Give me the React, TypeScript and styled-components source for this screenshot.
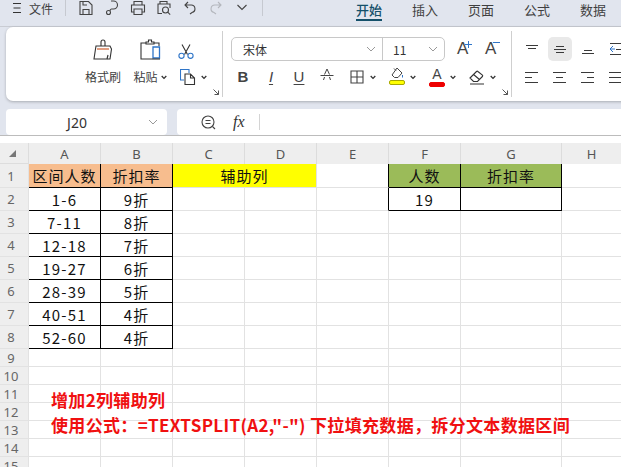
import React from 'react';
import styled, { createGlobalStyle } from 'styled-components';

const CJK = `"Noto Sans CJK SC", "Noto Sans", sans-serif`;
const INK = '#3f3f3f';

const GlobalStyle = createGlobalStyle`
	html, body {
		margin: 0;
		height: 467px;
		overflow: hidden;
		background: #fff;
		font-family: ${CJK};
	}
`;

const Page = styled.div`
	width: 621px;
	height: 467px;
	overflow: hidden;
`;

// 상단 타이틀 바
const TitleBar = styled.div`
	height: 26px;
	display: flex;
	align-items: flex-start;
	padding: 0 15px 0 13px;
	background: #e1e5ee;
	border-bottom: 1px solid #c9ccd3;
`;

const MenuGlyph = styled.svg`
	width: 8px;
	height: 12px;
	margin-top: 2px;
	margin-right: 8px;
`;

const FileLabel = styled.span`
	font-size: 12px;
	line-height: 18px;
	color: ${INK};
	white-space: nowrap;
`;

const BarDivider = styled.div<{ $left: number; $right: number }>`
	width: 1px;
	height: 16px;
	background: #c6c9d0;
	margin-left: ${(p) => p.$left}px;
	margin-right: ${(p) => p.$right}px;
`;

const QuickTools = styled.div`
	display: flex;
	gap: 10px;
	height: 16px;
`;

const Tabs = styled.nav`
	display: flex;
	gap: 30px;
	margin-left: auto;
`;

const Tab = styled.span<{ $active?: boolean }>`
	height: 19px;
	font-size: 13px;
	line-height: 19px;
	white-space: nowrap;
	font-weight: ${(p) => (p.$active ? 500 : 400)};
	color: ${(p) => (p.$active ? '#14506a' : INK)};
	border-bottom: 2px solid ${(p) => (p.$active ? '#14506a' : 'transparent')};
`;

// 리본 메뉴
const ToolArea = styled.div`
	background: #e1e5ee;
	padding: 0 0 0 6px;
	height: 108px;
	border-bottom: 1px solid #bcbcbc;
`;

const Ribbon = styled.div`
	width: 640px;
	height: 74px;
	display: flex;
	padding: 4px 0;
	box-sizing: border-box;
	background: #fff;
	border-radius: 7px;
	box-shadow: 0 1px 3px rgba(0, 0, 0, 0.25);
`;

const Group = styled.div<{ $width: number; $pad: number }>`
	position: relative;
	width: ${(p) => p.$width}px;
	box-sizing: border-box;
	padding: 6px 0 0 ${(p) => p.$pad}px;
	border-right: 1px solid #cfcfcf;
	display: flex;
	flex-direction: column;
	gap: 4px;
`;

const OpenAlign = styled(Group)`
	border-right: 0;
`;

const Launcher = styled.svg`
	position: absolute;
	right: 3px;
	bottom: 2px;
	width: 6px;
	height: 6px;
`;

const ClipGrid = styled.div`
	display: grid;
	grid-template-columns: 46px 48px 42px;
	grid-template-rows: 24px 24px;
	row-gap: 4px;
`;

const BigIcon = styled.div`
	display: flex;
	justify-content: center;
	align-items: flex-end;
	padding-bottom: 1px;
`;

const ToolLabel = styled.div`
	display: flex;
	justify-content: center;
	align-items: center;
	gap: 3px;
	font-size: 12px;
	line-height: 22px;
	color: ${INK};
	white-space: nowrap;
`;

const ScissorSlot = styled.div`
	display: flex;
	align-items: center;
	padding: 5px 0 0 4px;
`;

const CopySlot = styled.div`
	display: flex;
	align-items: center;
	gap: 5px;
	padding-left: 6px;
`;

const ToolRow = styled.div`
	display: flex;
	align-items: center;
	height: 24px;
`;

const FontSelect = styled.div`
	width: 214px;
	height: 24px;
	box-sizing: border-box;
	display: flex;
	border: 1px solid #c8c8c8;
	border-radius: 5px;
`;

const SelectPart = styled.div<{ $width?: number; $pad: number; $divide?: boolean }>`
	flex: ${(p) => (p.$width ? `0 0 ${p.$width}px` : 1)};
	box-sizing: border-box;
	display: flex;
	align-items: center;
	justify-content: space-between;
	padding: 0 6px 0 ${(p) => p.$pad}px;
	font-size: 12px;
	color: #333;
	border-left: ${(p) => (p.$divide ? '1px solid #c8c8c8' : 'none')};
`;

const SizeButtons = styled.div`
	display: flex;
	gap: 14px;
	margin-left: 12px;
`;

const SizeButton = styled.div`
	display: flex;
	width: 14px;
	align-items: flex-start;
	font-family: 'Liberation Sans', sans-serif;
	font-size: 17px;
	line-height: 20px;
	color: #444;
`;

const SizeMark = styled.svg`
	width: 7px;
	height: 7px;
	margin-left: -3px;
	margin-top: 2px;
	flex: none;
`;

const FormatRow = styled(ToolRow)`
	gap: 14px;
	padding-left: 4px;
`;

const PlainTools = styled.div`
	display: flex;
	gap: 12px;
`;

const DropTools = styled.div`
	display: flex;
	gap: 13px;
`;

const DropTool = styled.div`
	display: flex;
	align-items: center;
	gap: 5px;
`;

const LetterTool = styled.span<{ $bold?: boolean; $italic?: boolean; $mark?: string }>`
	width: 16px;
	height: 20px;
	text-align: center;
	font-family: 'Liberation Sans', sans-serif;
	font-size: 15px;
	line-height: 19px;
	color: #444;
	font-weight: ${(p) => (p.$bold ? 700 : 400)};
	font-style: ${(p) => (p.$italic ? 'italic' : 'normal')};
	text-decoration: ${(p) => p.$mark || 'none'};
	text-decoration-thickness: 1px;
	text-underline-offset: 2px;
`;

const ColorTool = styled.div`
	width: 16px;
	height: 20px;
	display: flex;
	flex-direction: column;
	align-items: center;
`;

const ColorLetter = styled.span`
	font-family: 'Liberation Sans', sans-serif;
	font-size: 14px;
	line-height: 14px;
	color: #444;
`;

const ColorBar = styled.span<{ $fill: string; $line: string }>`
	width: 16px;
	height: 5px;
	margin-top: 1px;
	box-sizing: border-box;
	background: ${(p) => p.$fill};
	border: 1px solid ${(p) => p.$line};
	border-radius: 2px;
`;

const AlignGrid = styled.div`
	display: grid;
	grid-template-columns: repeat(4, 24px);
	grid-auto-rows: 24px;
	gap: 4px;
`;

const AlignButton = styled.div<{ $on?: boolean }>`
	display: flex;
	align-items: center;
	justify-content: center;
	border-radius: 5px;
	background: ${(p) => (p.$on ? '#e9e9e9' : 'transparent')};
`;

// 수식 입력줄
const FormulaRow = styled.div`
	display: flex;
	gap: 10px;
	margin-top: 8px;
	height: 26px;
`;

const NameBox = styled.div`
	width: 161px;
	flex: none;
	display: flex;
	align-items: center;
	background: #fff;
	border-radius: 4px;
	font-family: 'Noto Sans', sans-serif;
	font-size: 14px;
	color: #333;
`;

const NameText = styled.span`
	width: 142px;
	text-align: center;
`;

const FormulaBox = styled.div`
	flex: 1;
	display: flex;
	align-items: center;
	padding-left: 24px;
	background: #fff;
	border-radius: 4px 0 0 4px;
`;

const FxLabel = styled.span`
	width: 26px;
	margin-left: 17px;
	font-family: 'Liberation Serif', serif;
	font-style: italic;
	font-size: 16px;
	color: #333;
`;

const FormulaDivider = styled.span`
	width: 1px;
	height: 16px;
	background: #d4d4d4;
`;

// 시트 영역
const SheetWrap = styled.div`
	position: relative;
	padding-top: 7px;
`;

const Sheet = styled.div`
	display: grid;
	grid-template-columns: 29px repeat(6, 72px) 101px 60px;
	grid-template-rows: 21px 24px repeat(7, 23px) repeat(7, 18px);
`;

const Corner = styled.div`
	display: flex;
	align-items: center;
	padding-left: 9px;
	background: #eee;
	border-right: 1px solid #ddd;
	border-bottom: 1px solid #ddd;
`;

const ColHead = styled.div`
	display: flex;
	align-items: center;
	justify-content: center;
	background: #eee;
	border-right: 1px solid #dcdcdc;
	font-family: 'Noto Sans', sans-serif;
	font-size: 13px;
	color: #555;
`;

const RowHead = styled.div`
	display: flex;
	align-items: center;
	justify-content: center;
	padding-right: 6px;
	background: #eee;
	border-bottom: 1px solid #e2e2e2;
	border-right: 1px solid #e2e2e2;
	font-family: 'Noto Sans', sans-serif;
	font-size: 13px;
	color: #666;
`;

const Cell = styled.div<{ $fill?: string; $right?: boolean; $bottom?: boolean; $span?: number; $digits?: boolean }>`
	display: flex;
	align-items: center;
	justify-content: center;
	grid-column: span ${(p) => p.$span || 1};
	overflow: hidden;
	white-space: nowrap;
	background: ${(p) => p.$fill || '#fff'};
	border-right: 1px solid ${(p) => (p.$right ? '#000' : '#e2e2e2')};
	border-bottom: 1px solid ${(p) => (p.$bottom ? '#000' : '#e2e2e2')};
	font-size: 15px;
	letter-spacing: ${(p) => (p.$digits ? 1.2 : 1)}px;
	color: #111;
`;

const Note = styled.div`
	position: absolute;
	left: 51px;
	top: 251px;
	font-size: 17px;
	line-height: 25px;
	letter-spacing: 0.33px;
	font-weight: 700;
	white-space: nowrap;
	color: #f01010;
`;

const LINE = { fill: 'none', stroke: '#444', strokeWidth: 1.1 } as const;

const Chevron = () => (
	<svg width="6" height="5" viewBox="0 0 6 5">
		<path d="M.7 1l2.300 2.400L5.300 1" fill="none" stroke="#333" strokeWidth="1.300" />
	</svg>
);

const SelectChevron = () => (
	<svg width="10" height="6" viewBox="0 0 10 6">
		<path d="M1 1l4 4 4-4" fill="none" stroke="#999" strokeWidth="1" />
	</svg>
);

const Save = () => (
	<svg width="16" height="16" viewBox="0 0 16 16" {...LINE}>
		<path d="M2 1.500h8.500l3.500 3.500v9.500H2z" />
		<path d="M5 14v-4.500h6V14M5 2v3h4" />
	</svg>
);

const Painter = () => (
	<svg width="16" height="16" viewBox="0 0 16 16" {...LINE}>
		<path d="M7 1h2.500a4 4 0 0 1 0 8H7.500c-1 0-1.500 1-1.500 2" />
		<circle cx="4.500" cy="12.500" r="2" />
	</svg>
);

const Printer = () => (
	<svg width="16" height="16" viewBox="0 0 16 16" {...LINE}>
		<path d="M4 5V1.500h8V5M4 12H1.500V5h13v7H12" />
		<path d="M4 9h8v5.500H4z" />
	</svg>
);

const Preview = () => (
	<svg width="16" height="16" viewBox="0 0 16 16" {...LINE}>
		<path d="M4 4V1.500h7V4M6 13.500H2V4h12v4" />
		<circle cx="9.500" cy="10" r="3" />
		<path d="M11.700 12.200l2.500 2.500" />
	</svg>
);

const Undo = () => (
	<svg width="16" height="16" viewBox="0 0 16 16" {...LINE}>
		<path d="M6 2L3 5l3 3M3 5h6a3.800 3.800 0 0 1 1 7.500L8 14" />
	</svg>
);

const Redo = () => (
	<svg width="16" height="16" viewBox="0 0 16 16" {...LINE} stroke="#b4b7bd">
		<path d="M10 2l3 3-3 3M13 5H7a3.800 3.800 0 0 0-1 7.500L8 14" />
	</svg>
);

const QuickChevron = () => (
	<svg width="16" height="16" viewBox="0 0 16 16" {...LINE}>
		<path d="M3.500 5L8 9.500 12.500 5" />
	</svg>
);

const Brush = () => (
	<svg width="20" height="21" viewBox="0 0 20 21" fill="none" stroke="#333" strokeWidth="1.100">
		<path d="M8 7V3a2 2 0 0 1 4 0v4" />
		<path d="M3 7h14l1.500 3-1.500 10H1L2.500 10z" />
		<path d="M4 10h12" stroke="#c8501e" />
		<path d="M14 20l1-4" />
	</svg>
);

const Paste = () => (
	<svg width="21" height="21" viewBox="0 0 21 21" fill="none" stroke="#333" strokeWidth="1.100">
		<path d="M12 20H1V4h5M14 4h5v3" />
		<path d="M6 5V3h2.500V1h3v2H14v2z" />
		<path d="M13 8h6.500v11H13z" stroke="#2f75c8" strokeWidth="1.300" />
		<path d="M12 20h8" />
	</svg>
);

const Scissors = () => (
	<svg width="16" height="15" viewBox="0 0 16 15" fill="none" strokeWidth="1.100">
		<path d="M4 0.500l5.500 10M12 0.500L6.500 10.500" stroke="#333" />
		<circle cx="3.500" cy="11.800" r="2.600" stroke="#2f75c8" />
		<circle cx="12.500" cy="11.800" r="2.600" stroke="#2f75c8" />
	</svg>
);

const Copy = () => (
	<svg width="16" height="16" viewBox="0 0 16 16" fill="none" strokeWidth="1.100">
		<path d="M4 11H.5V.500H9V4" stroke="#2f75c8" />
		<path d="M5 15.500V5h5.500l4 4v6.500zM10.500 5v4h4" stroke="#333" />
	</svg>
);

const Strike = () => (
	<svg width="16" height="18" viewBox="0 0 16 18" fill="none" stroke="#444" strokeWidth="1">
		<path d="M5.500 7.500L8 2l2.500 5.500M4.500 13l1-3M11.500 13l-1-3M1.500 8.500h13" />
	</svg>
);

const Borders = () => (
	<svg width="16" height="16" viewBox="0 0 16 16" fill="none" stroke="#444" strokeWidth="1.100">
		<path d="M2 2h12v12H2zM8 2v12M2 8h12" />
	</svg>
);

const Bucket = () => (
	<svg width="16" height="12" viewBox="0 0 16 12" fill="none" stroke="#444" strokeWidth="1">
		<path d="M8 1l5 5-4 4.500H5.500L3 8z" />
		<path d="M5 1.500l2 2" />
		<path d="M13.500 8v2.500" stroke="#2f75c8" />
	</svg>
);

const Eraser = () => (
	<svg width="16" height="16" viewBox="0 0 16 16" fill="none" stroke="#333" strokeWidth="1.100">
		<path d="M1 9l6.500-6.500a1 1 0 0 1 1.400 0l4.500 3.600a1 1 0 0 1 0 1.400L8.500 12.500H4.500z" />
		<path d="M4.500 5.500l6 5M1 15h14" />
	</svg>
);

const Bars = ({ rows, blue }: { rows: number[][]; blue?: boolean }) => (
	<svg width="14" height="14" viewBox="0 0 14 14" fill="none" stroke="#3a3a3a" strokeWidth="1">
		{rows.map(([x1, x2, y], i) => (
			<path key={i} d={`M${x1} ${y}.5H${x2}`} />
		))}
		{blue && <path d="M4 4L1 7l3 3M1 7h5" stroke="#2f75c8" />}
	</svg>
);

const ALIGN: { rows: number[][]; on?: boolean; blue?: boolean }[] = [
	{ rows: [[1, 13, 3], [3, 11, 6]] },
	{ rows: [[3, 11, 4], [1, 13, 7], [3, 11, 10]], on: true },
	{ rows: [[3, 11, 8], [1, 13, 11]] },
	{ rows: [[1, 14, 1], [7, 14, 7], [1, 14, 12]], blue: true },
	{ rows: [[0, 13, 2], [0, 7, 7], [0, 13, 12]] },
	{ rows: [[0, 13, 2], [3, 10, 7], [0, 13, 12]] },
	{ rows: [[0, 13, 2], [6, 13, 7], [0, 13, 12]] },
	{ rows: [[0, 14, 2], [0, 14, 7], [0, 14, 12]] },
];

const LauncherIcon = () => (
	<Launcher viewBox="0 0 6 6" fill="none" stroke="#555" strokeWidth="1">
		<path d="M.5.500l5 5M1.500 5.500h4v-4" />
	</Launcher>
);

const COLUMNS = ['A', 'B', 'C', 'D', 'E', 'F', 'G', 'H'];

const RANGES: [string, string][] = [
	['1-6', '9折'],
	['7-11', '8折'],
	['12-18', '7折'],
	['19-27', '6折'],
	['28-39', '5折'],
	['40-51', '4折'],
	['52-60', '4折'],
];

// 행마다 셀 렌더링
function SheetRow({ row }: { row: number }) {
	if (row === 1) {
		return (
			<>
				<RowHead>1</RowHead>
				<Cell $fill='#f7bd8e' $right $bottom>区间人数</Cell>
				<Cell $fill='#f7bd8e' $right $bottom>折扣率</Cell>
				<Cell $fill='#ffff00' $span={2}>辅助列</Cell>
				<Cell $right />
				<Cell $fill='#9bbb59' $right $bottom>人数</Cell>
				<Cell $fill='#9bbb59' $right $bottom>折扣率</Cell>
				<Cell />
			</>
		);
	}
	const range = RANGES[row - 2];
	return (
		<>
			<RowHead>{row}</RowHead>
			<Cell $digits $right={!!range} $bottom={!!range}>{range && range[0]}</Cell>
			<Cell $right={!!range} $bottom={!!range}>{range && range[1]}</Cell>
			<Cell />
			<Cell />
			<Cell $right={row === 2} />
			<Cell $digits $right={row === 2} $bottom={row === 2}>{row === 2 && '19'}</Cell>
			<Cell $right={row === 2} $bottom={row === 2} />
			<Cell />
		</>
	);
}

function App() {
	return (
		<Page>
			<GlobalStyle />
			<TitleBar>
				<MenuGlyph viewBox="0 0 8 12" fill="none" stroke="#333" strokeWidth="1">
					<path d="M0 1.500h8M.5 6h7M0 10.500h8" />
				</MenuGlyph>
				<FileLabel>文件</FileLabel>
				<BarDivider $left={12} $right={12} />
				<QuickTools>
					<Save />
					<Painter />
					<Printer />
					<Preview />
					<Undo />
					<Redo />
					<QuickChevron />
				</QuickTools>
				<BarDivider $left={12} $right={0} />
				<Tabs>
					<Tab $active>开始</Tab>
					<Tab>插入</Tab>
					<Tab>页面</Tab>
					<Tab>公式</Tab>
					<Tab>数据</Tab>
				</Tabs>
			</TitleBar>
			<ToolArea>
				<Ribbon>
					<Group $width={217} $pad={74}>
						<ClipGrid>
							<BigIcon><Brush /></BigIcon>
							<BigIcon><Paste /></BigIcon>
							<ScissorSlot><Scissors /></ScissorSlot>
							<ToolLabel>格式刷</ToolLabel>
							<ToolLabel>粘贴<Chevron /></ToolLabel>
							<CopySlot><Copy /><Chevron /></CopySlot>
						</ClipGrid>
						<LauncherIcon />
					</Group>
					<Group $width={289} $pad={8}>
						<ToolRow>
							<FontSelect>
								<SelectPart $pad={11}>宋体<SelectChevron /></SelectPart>
								<SelectPart $width={62} $pad={10} $divide>11<SelectChevron /></SelectPart>
							</FontSelect>
							<SizeButtons>
								<SizeButton>
									A
									<SizeMark viewBox="0 0 7 7" stroke="#2f75c8" strokeWidth="1">
										<path d="M0 3.500h7M3.500 0v7" />
									</SizeMark>
								</SizeButton>
								<SizeButton>
									A
									<SizeMark viewBox="0 0 7 7" stroke="#2f75c8" strokeWidth="1">
										<path d="M0 1.500h7" />
									</SizeMark>
								</SizeButton>
							</SizeButtons>
						</ToolRow>
						<FormatRow>
							<PlainTools>
								<LetterTool $bold>B</LetterTool>
								<LetterTool $italic $mark='underline'>I</LetterTool>
								<LetterTool $mark='underline'>U</LetterTool>
								<Strike />
							</PlainTools>
							<DropTools>
								<DropTool><Borders /><Chevron /></DropTool>
								<DropTool>
									<ColorTool>
										<Bucket />
										<ColorBar $fill='#ffff00' $line='#a8a800' />
									</ColorTool>
									<Chevron />
								</DropTool>
								<DropTool>
									<ColorTool>
										<ColorLetter>A</ColorLetter>
										<ColorBar $fill='#ee0000' $line='#ee0000' />
									</ColorTool>
									<Chevron />
								</DropTool>
								<DropTool><Eraser /><Chevron /></DropTool>
							</DropTools>
						</FormatRow>
						<LauncherIcon />
					</Group>
					<OpenAlign $width={130} $pad={8}>
						<AlignGrid>
							{ALIGN.map((a, i) => (
								<AlignButton key={i} $on={a.on}>
									<Bars rows={a.rows} blue={a.blue} />
								</AlignButton>
							))}
						</AlignGrid>
					</OpenAlign>
				</Ribbon>
				<FormulaRow>
					<NameBox>
						<NameText>J20</NameText>
						<SelectChevron />
					</NameBox>
					<FormulaBox>
						<svg width="15" height="15" viewBox="0 0 15 15" fill="none" stroke="#444" strokeWidth="1.100">
							<circle cx="7" cy="7" r="6" />
							<path d="M4.500 5.500h5M4.500 8.500h5M11.500 11.500l2.500 2.500" />
						</svg>
						<FxLabel>fx</FxLabel>
						<FormulaDivider />
					</FormulaBox>
				</FormulaRow>
			</ToolArea>
			<SheetWrap>
				<Sheet>
					<Corner>
						<svg width="7" height="7" viewBox="0 0 7 7">
							<path d="M7 0v7H0z" fill="#777" />
						</svg>
					</Corner>
					{COLUMNS.map((c) => (
						<ColHead key={c}>{c}</ColHead>
					))}
					{Array.from({ length: 15 }, (_, i) => (
						<SheetRow key={i} row={i + 1} />
					))}
				</Sheet>
				<Note>
					增加2列辅助列
					<br />
					使用公式：=TEXTSPLIT(A2,"-") 下拉填充数据，拆分文本数据区间
				</Note>
			</SheetWrap>
		</Page>
	);
}

export default App;
